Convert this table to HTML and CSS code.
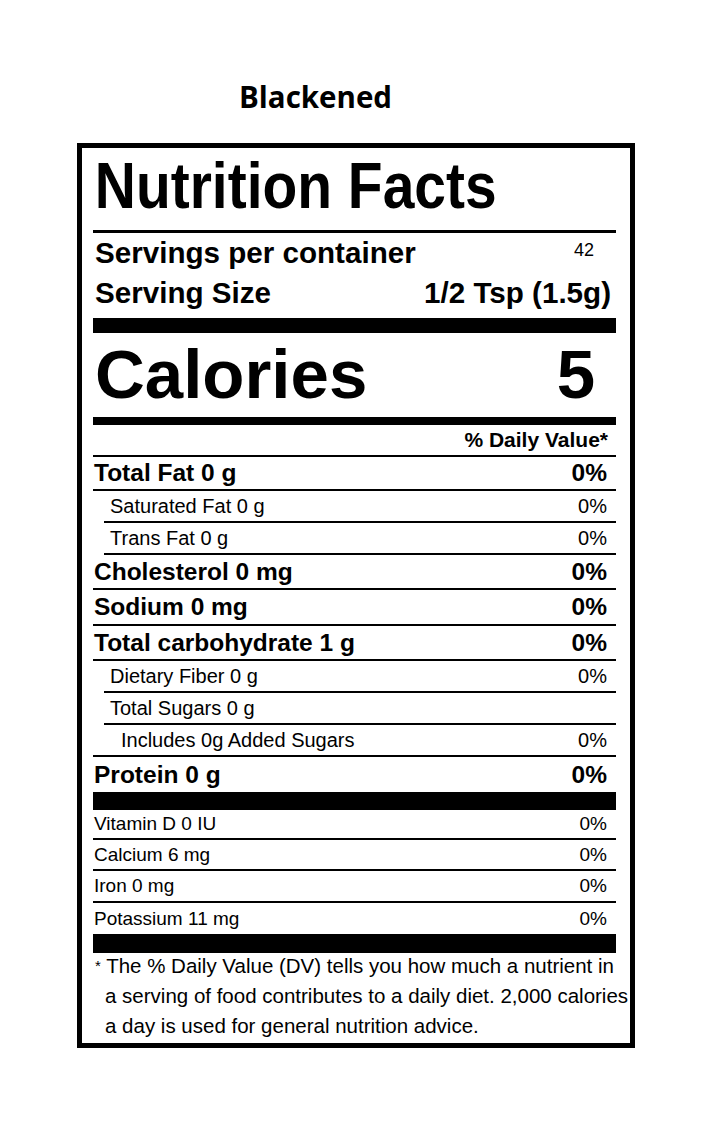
FILE: index.html
```html
<!DOCTYPE html>
<html>
<head>
<meta charset="utf-8">
<title>Blackened Nutrition Facts</title>
<link rel="stylesheet" href="styles.css">
</head>
<body>
<div class="title">Blackened</div>
<div class="label">
  <div class="nf-head"><span class="nf-title">Nutrition Facts</span></div>
  <div class="serv-row"><span>Servings per container</span><span class="serv-count">42</span></div>
  <div class="serv-row"><span>Serving Size</span><span class="serv-size">1/2 Tsp (1.5g)</span></div>
  <div class="bar bar-cal"></div>
  <div class="cal-row"><span>Calories</span><span class="cal-val">5</span></div>
  <div class="bar bar-dv"></div>
  <div class="dv-head">% Daily Value*</div>
  <div class="row major h32"><span>Total Fat 0 g</span><span class="pct">0%</span></div>
  <div class="row sub h30"><span>Saturated Fat 0 g</span><span class="pct">0%</span></div>
  <div class="row sub h30"><span>Trans Fat 0 g</span><span class="pct">0%</span></div>
  <div class="row major h33"><span>Cholesterol 0 mg</span><span class="pct">0%</span></div>
  <div class="row major h34"><span>Sodium 0 mg</span><span class="pct">0%</span></div>
  <div class="row major h33"><span>Total carbohydrate 1 g</span><span class="pct">0%</span></div>
  <div class="row sub h30"><span>Dietary Fiber 0 g</span><span class="pct">0%</span></div>
  <div class="row sub h30"><span>Total Sugars 0 g</span><span class="pct"></span></div>
  <div class="row subsub h30"><span>Includes 0g Added Sugars</span><span class="pct">0%</span></div>
  <div class="row major h35 last"><span>Protein 0 g</span><span class="pct">0%</span></div>
  <div class="bar bar-vit"></div>
  <div class="row vit h28"><span>Vitamin D 0 IU</span><span class="pct">0%</span></div>
  <div class="row vit h29"><span>Calcium 6 mg</span><span class="pct">0%</span></div>
  <div class="row vit h30"><span>Iron 0 mg</span><span class="pct">0%</span></div>
  <div class="row vit h31 last"><span>Potassium 11 mg</span><span class="pct">0%</span></div>
  <div class="bar bar-foot"></div>
  <div class="footnote">
    <div class="fn-line"><span class="ast">*</span> The % Daily Value (DV) tells you how much a nutrient in</div>
    <div class="fn-line indent">a serving of food contributes to a daily diet. 2,000 calories</div>
    <div class="fn-line indent">a day is used for general nutrition advice.</div>
  </div>
</div>
</body>
</html>
```

FILE: styles.css
```css
html, body {
  margin: 0;
  padding: 0;
  background: #fff;
  color: #000;
}

.title {
  font-family: "Open Sans", sans-serif;
  font-weight: 700;
  font-size: 29.5px;
  line-height: 34px;
  padding: 80px 0 0 239px;
  margin-bottom: 29px;
}

.label {
  box-sizing: border-box;
  width: 558px;
  margin-left: 77px;
  border: 5px solid #000;
  padding: 0 14px 0 11px;
  font-family: "Liberation Sans", Arial, sans-serif;
  color: #000;
}

.nf-head {
  padding-top: 6px;
  padding-bottom: 12px;
  border-bottom: 3px solid #000;
  line-height: 64px;
  height: 64px;
  white-space: nowrap;
}

.nf-title {
  display: inline-block;
  font-size: 64px;
  font-weight: 700;
  transform: scaleX(0.89);
  transform-origin: left center;
  padding-left: 2px;
}

.serv-row {
  display: flex;
  justify-content: space-between;
  font-size: 29.6px;
  font-weight: 700;
  line-height: 40px;
  height: 40px;
  padding-left: 2px;
}

.serv-count {
  font-size: 18px;
  font-weight: 400;
  line-height: 24px;
  padding-top: 5px;
  margin-right: 22px;
}

.serv-size {
  margin-right: 5px;
}

.bar {
  background: #000;
}

.bar-cal {
  height: 15px;
  margin-top: 5px;
}

.bar-dv {
  height: 8px;
}

.bar-vit {
  height: 18px;
}

.bar-foot {
  height: 19px;
}

.cal-row {
  display: flex;
  justify-content: space-between;
  font-size: 69px;
  font-weight: 700;
  line-height: 84px;
  height: 84px;
  padding-left: 2px;
}

.cal-val {
  margin-right: 21px;
}

.dv-head {
  text-align: right;
  font-size: 21px;
  font-weight: 700;
  line-height: 30px;
  padding-right: 8px;
  border-bottom: 2px solid #000;
}

.row {
  display: flex;
  justify-content: space-between;
  border-bottom: 2px solid #000;
  white-space: nowrap;
}

.row.last {
  border-bottom: none;
}

.row .pct {
  padding-right: 9px;
}

.major {
  font-size: 24.5px;
  font-weight: 700;
  padding-left: 1px;
}

.sub {
  font-size: 20px;
  margin-left: 11px;
  padding-left: 6px;
}

.subsub {
  font-size: 20px;
  padding-left: 28px;
}

.vit {
  font-size: 19px;
  padding-left: 1px;
}

.h28 { line-height: 28px; }
.h29 { line-height: 29px; }
.h30 { line-height: 30px; }
.h31 { line-height: 31px; }
.h32 { line-height: 32px; }
.h33 { line-height: 33px; }
.h34 { line-height: 34px; }
.h35 { line-height: 35px; }

.footnote {
  font-size: 20.5px;
  line-height: 30px;
  white-space: nowrap;
  margin-top: -2px;
  height: 92px;
}

.fn-line {
  padding-left: 2px;
}

.fn-line.indent {
  padding-left: 12px;
}

.ast {
  font-size: 15px;
  vertical-align: 2px;
}
```
